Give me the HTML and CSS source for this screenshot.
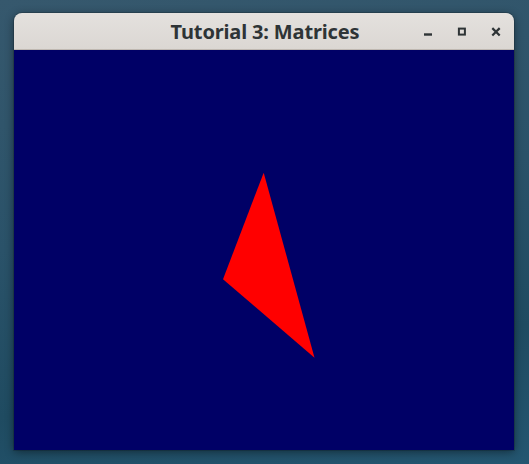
FILE: index.html
```html
<!DOCTYPE html>
<html>
<head>
<meta charset="utf-8">
<link rel="stylesheet" href="styles.css">
</head>
<body>
<div class="desktop">
  <div class="window">
    <div class="titlebar">
      <div class="spacer"></div>
      <div class="title">Tutorial 3: Matrices</div>
      <div class="controls">
        <div class="btn">
          <svg width="10" height="10" viewBox="0 0 10 10"><rect x="1" y="6.3" width="8" height="2.4" fill="#2e3436"/></svg>
        </div>
        <div class="btn">
          <svg width="10" height="10" viewBox="0 0 10 10"><rect x="1.9" y="1.6" width="6" height="6" fill="none" stroke="#2e3436" stroke-width="2"/></svg>
        </div>
        <div class="btn">
          <svg width="10" height="10" viewBox="0 0 10 10"><path d="M1.3 1.1 L8.7 8.5 M8.7 1.1 L1.3 8.5" stroke="#2e3436" stroke-width="2.2"/></svg>
        </div>
      </div>
    </div>
    <div class="canvas">
      <svg width="500" height="400" viewBox="0 0 500 400">
        <polygon points="249.7,122.7 209,229.3 300.5,307.7" fill="#ff0000"/>
      </svg>
    </div>
  </div>
</div>
</body>
</html>
```

FILE: styles.css
```css
html, body {
  margin: 0;
  padding: 0;
}
.desktop {
  width: 529px;
  height: 464px;
  box-sizing: border-box;
  padding: 13px 15px 14px 14px;
  background: linear-gradient(170deg, #36586d 0%, #2a5269 45%, #1f4b61 75%, #245671 100%);
  overflow: hidden;
}
.window {
  width: 500px;
  display: flex;
  flex-direction: column;
  border-radius: 8px 8px 0 0;
  box-shadow: 0 2px 10px rgba(0, 0, 0, 0.45), 0 0 0 1px rgba(0, 0, 0, 0.15);
}
.titlebar {
  height: 36px;
  border-bottom: 1px solid #bfb8b1;
  background: linear-gradient(#e4e1de, #dbd7d3);
  border-radius: 8px 8px 0 0;
  display: grid;
  grid-template-columns: 1fr auto 1fr;
  align-items: center;
}
.title {
  font-family: "Noto Sans", sans-serif;
  font-weight: 700;
  font-size: 20px;
  letter-spacing: -0.15px;
  color: #2e3436;
  padding-left: 2px;
  padding-top: 1px;
}
.controls {
  display: flex;
  justify-content: flex-end;
  padding-right: 1px;
  padding-top: 1px;
}
.btn {
  width: 34px;
  display: flex;
  justify-content: center;
  align-items: center;
}
.btn svg {
  display: block;
}
.canvas {
  height: 400px;
  background: #000066;
}
.canvas svg {
  display: block;
}
```
